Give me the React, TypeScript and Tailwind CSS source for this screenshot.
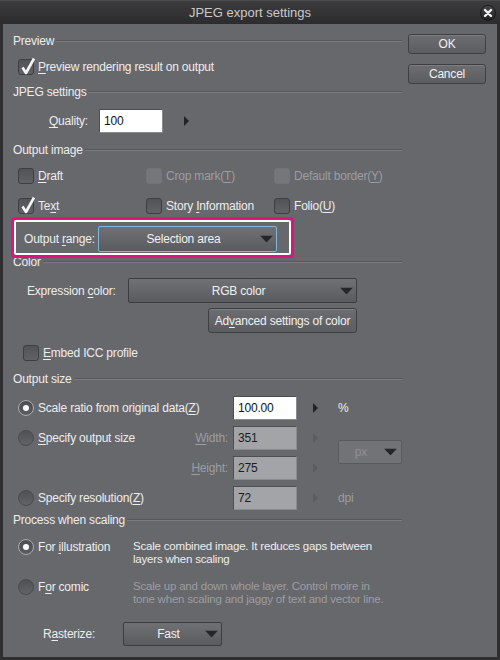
import React from "react";

const FONT = "font-['Liberation_Sans','DejaVu_Sans',sans-serif]";

function U({ children }: { children: React.ReactNode }) {
  return <span className="underline underline-offset-[2px] decoration-1">{children}</span>;
}

function Check({ checked = false, disabled = false }: { checked?: boolean; disabled?: boolean }) {
  return (
    <span
      className={`relative inline-block shrink-0 w-[16px] h-[16px] rounded-[3px] border ${
        disabled
          ? "border-[#737478] bg-[#76777b]"
          : "border-[#3d3e42] bg-gradient-to-b from-[#525357] to-[#616266]"
      }`}
    >
      {checked && (
        <svg className="absolute -top-[4px] left-[0px]" width="17" height="20" viewBox="0 0 17 20">
          <path d="M3.5 11.5 L7 17 L15 2.5" stroke="#f4f4f4" strokeWidth="2.6" fill="none" strokeLinejoin="round" />
        </svg>
      )}
    </span>
  );
}

function Radio({ on = false }: { on?: boolean }) {
  return (
    <span
      className={`relative inline-flex shrink-0 items-center justify-center w-[16px] h-[16px] rounded-full border ${
        on
          ? "border-[#a9aaad] bg-gradient-to-b from-[#4c4d51] to-[#5c5d61]"
          : "border-[#4a4b4f] bg-gradient-to-b from-[#505155] to-[#626367]"
      }`}
    >
      {on && <span className="w-[6px] h-[6px] rounded-full bg-white" />}
    </span>
  );
}

function Header({ title, className }: { title: string; className: string }) {
  return (
    <div className={`flex items-center h-[16px] ${className}`}>
      <span className="pr-[2px] leading-[16px] whitespace-nowrap">{title}</span>
      <div className="flex-1 h-[2px] border-t border-t-[#56575b] border-b border-b-[#7b7c80]" />
    </div>
  );
}

function RightArrow({ disabled = false }: { disabled?: boolean }) {
  return (
    <svg width="5" height="10" viewBox="0 0 5 10" className="shrink-0">
      <path d="M0 0 L5 5 L0 10 Z" fill={disabled ? "#5b5c60" : "#222326"} />
    </svg>
  );
}

function DownTri() {
  return (
    <svg width="13" height="7" viewBox="0 0 13 7" className="shrink-0">
      <path d="M0 0 L13 0 L6.5 7 Z" fill="#252629" />
    </svg>
  );
}

function Dropdown({
  label,
  className,
  focused = false,
}: {
  label: string;
  className: string;
  focused?: boolean;
}) {
  return (
    <div
      className={`relative flex items-center justify-center rounded-[2px] border ${
        focused ? "border-[#7fb6dc]" : "border-[#3c3d41]"
      } bg-gradient-to-b from-[#707175] to-[#5a5b5f] ${className}`}
    >
      <span className="pr-[8px] text-[#f0f0f0] whitespace-nowrap">{label}</span>
      <span className="absolute right-[3px] top-1/2 -translate-y-1/2 flex">
        <DownTri />
      </span>
    </div>
  );
}

function Field({ value, disabled = false }: { value: string; disabled?: boolean }) {
  return (
    <div
      className={`w-[64px] h-[24px] shrink-0 flex items-center pl-[4px] border border-t-[#4e4f53] border-l-[#4e4f53] border-r-[#8a8b8f] border-b-[#8a8b8f] ${
        disabled ? "bg-[#a2a4a8] text-[#1c1c1c]" : "bg-white text-[#111]"
      }`}
    >
      {value}
    </div>
  );
}

function Button({ children, className }: { children: React.ReactNode; className: string }) {
  return (
    <div
      className={`flex items-center justify-center rounded-[3px] border border-[#3e3f43] bg-gradient-to-b from-[#6c6d71] to-[#5c5d61] shadow-[inset_0_1px_0_#7c7d81] text-[#f0f0f0] whitespace-nowrap ${className}`}
    >
      {children}
    </div>
  );
}

export default function App() {
  return (
    <div className={`${FONT} w-[500px] h-[660px] bg-[#2f2f31] text-[12px] leading-[16px] tracking-[-0.2px] text-[#ededed] flex flex-col select-none`}>
      {/* title bar */}
      <div className="relative h-[24px] shrink-0 flex items-center justify-center bg-gradient-to-b from-[#3c3c3e] to-[#2c2c2e] border-t border-[#4a4a4c]">
        <span className="text-[13px] text-[#c9c9c9] tracking-normal">JPEG export settings</span>
        <span className="absolute left-[480px] top-[4px] w-[16px] h-[16px] rounded-full bg-gradient-to-b from-[#4a4a4c] to-[#1e1e20] border border-[#1a1a1a] flex items-center justify-center">
          <svg width="10" height="10" viewBox="0 0 10 10">
            <path d="M2 2 L8 8 M8 2 L2 8" stroke="#f2f2f2" strokeWidth="2.4" strokeLinecap="round" />
          </svg>
        </span>
      </div>

      {/* body */}
      <div className="relative flex flex-1 mx-[3px] mb-[3px] bg-[#67686c]">
        {/* left column */}
        <div className="w-[399px] pl-[10px] flex flex-col whitespace-nowrap">
          <Header title="Preview" className="mt-[9px]" />
          <div className="mt-[8px] h-[20px] flex items-center ml-[5px] gap-[4px]">
            <Check checked />
            <span><U>P</U>review rendering result on output</span>
          </div>

          <Header title="JPEG settings" className="mt-[7px]" />
          <div className="mt-[9px] h-[24px] flex items-center">
            <span className="w-[75px] text-right"><U>Q</U>uality:</span>
            <span className="ml-[11px]"><Field value="100" /></span>
            <span className="ml-[21px] flex"><RightArrow /></span>
          </div>

          <Header title="Output image" className="mt-[9px]" />
          <div className="mt-[8px] h-[20px] flex items-center ml-[5px]">
            <div className="w-[130px] flex items-center gap-[4px]">
              <Check />
              <span><U>D</U>raft</span>
            </div>
            <div className="w-[130px] flex items-center gap-[4px] text-[#9c9da1]">
              <Check disabled />
              <span>Crop mark(<U>T</U>)</span>
            </div>
            <div className="w-[130px] flex items-center gap-[4px] text-[#9c9da1]">
              <Check disabled />
              <span>Default border(<U>Y</U>)</span>
            </div>
          </div>
          <div className="mt-[10px] h-[20px] flex items-center ml-[5px]">
            <div className="w-[130px] flex items-center gap-[4px]">
              <Check checked />
              <span>Te<U>x</U>t</span>
            </div>
            <div className="w-[130px] flex items-center gap-[4px]">
              <Check />
              <span>Story <U>I</U>nformation</span>
            </div>
            <div className="w-[130px] flex items-center gap-[4px]">
              <Check />
              <span>Folio(<U>U</U>)</span>
            </div>
          </div>
          <div className="mt-[10px] h-[26px] flex items-center">
            <span className="ml-[11px] w-[74px] shrink-0">Output <U>r</U>ange:</span>
            <Dropdown label="Selection area" focused className="w-[179px] h-[26px]" />
          </div>

          <Header title="Color" className="mt-[2px]" />
          <div className="mt-[8px] h-[25px] flex items-center">
            <span className="ml-[14px] w-[101px] shrink-0">Expression <U>c</U>olor:</span>
            <Dropdown label="RGB color" className="w-[229px] h-[25px]" />
          </div>
          <div className="mt-[5px] h-[25px] flex items-center">
            <Button className="ml-[195px] w-[149px] h-[25px]">
              <span>Ad<U>v</U>anced settings of color</span>
            </Button>
          </div>
          <div className="mt-[10px] h-[20px] flex items-center ml-[10px] gap-[4px]">
            <Check />
            <span><U>E</U>mbed ICC profile</span>
          </div>

          <Header title="Output size" className="mt-[8px]" />
          <div className="mt-[9px] h-[24px] flex items-center">
            <div className="w-[220px] shrink-0 pl-[5px] flex items-center gap-[4px]">
              <Radio on />
              <span>Scale ratio from original data(<U>Z</U>)</span>
            </div>
            <Field value="100.00" />
            <span className="ml-[16px] flex"><RightArrow /></span>
            <span className="ml-[20px]">%</span>
          </div>
          <div className="mt-[6px] flex items-center">
            <div className="flex flex-col gap-[6px]">
              <div className="h-[24px] flex items-center">
                <div className="w-[220px] shrink-0 pl-[5px] flex items-center gap-[4px]">
                  <Radio />
                  <span><U>S</U>pecify output size</span>
                  <span className="flex-1 text-right pr-[5px] text-[#9c9da1]"><U>W</U>idth:</span>
                </div>
                <Field value="351" disabled />
                <span className="ml-[16px] flex"><RightArrow disabled /></span>
              </div>
              <div className="h-[24px] flex items-center">
                <div className="w-[220px] shrink-0 pr-[5px] text-right text-[#9c9da1]"><U>H</U>eight:</div>
                <Field value="275" disabled />
                <span className="ml-[16px] flex"><RightArrow disabled /></span>
              </div>
            </div>
            <div className="ml-[20px] mt-[-2px] w-[64px] h-[24px] relative flex items-center rounded-[2px] border border-[#5a5b5f] bg-[#727377]">
              <span className="w-[44px] text-center text-[#909195]">px</span>
              <span className="absolute right-[4px] top-1/2 -translate-y-1/2 flex">
                <DownTri />
              </span>
            </div>
          </div>
          <div className="mt-[6px] h-[24px] flex items-center">
            <div className="w-[220px] shrink-0 pl-[5px] flex items-center gap-[4px]">
              <Radio />
              <span>Specify resolution(<U>Z</U>)</span>
            </div>
            <Field value="72" disabled />
            <span className="ml-[16px] flex"><RightArrow disabled /></span>
            <span className="ml-[20px] text-[#9c9da1]">dpi</span>
          </div>

          <Header title="Process when scaling" className="mt-[2px]" />
          <div className="mt-[11px] h-[30px] flex items-start">
            <div className="w-[120px] shrink-0 pl-[5px] h-[16px] flex items-center gap-[4px]">
              <Radio on />
              <span>For <U>i</U>llustration</span>
            </div>
            <div className="mt-[1px] text-[11.5px] leading-[13px]">
              Scale combined image. It reduces gaps between
              <br />
              layers when scaling
            </div>
          </div>
          <div className="mt-[10px] h-[30px] flex items-start">
            <div className="w-[120px] shrink-0 pl-[5px] h-[16px] flex items-center gap-[4px]">
              <Radio />
              <span>F<U>o</U>r comic</span>
            </div>
            <div className="mt-[1px] text-[11.5px] leading-[13px] text-[#9c9da1]">
              Scale up and down whole layer. Control moire in
              <br />
              tone when scaling and jaggy of text and vector line.
            </div>
          </div>
          <div className="mt-[13px] h-[24px] flex items-center">
            <span className="ml-[30px] w-[80px] shrink-0">R<U>a</U>sterize:</span>
            <Dropdown label="Fast" className="w-[99px] h-[24px]" />
          </div>
        </div>

        {/* right column: dialog buttons */}
        <div className="ml-[6px] w-[78px] pt-[10px] flex flex-col gap-[10px]">
          <Button className="h-[20px]">OK</Button>
          <Button className="h-[20px]">Cancel</Button>
        </div>

        {/* highlight around the output range row */}
        <div className="absolute left-[8px] top-[193px] w-[283px] h-[41px] rounded-[4px] border-[3px] border-[#e0127f] pointer-events-none">
          <div className="w-full h-full rounded-[2px] border-[2px] border-white" />
        </div>
      </div>
    </div>
  );
}
